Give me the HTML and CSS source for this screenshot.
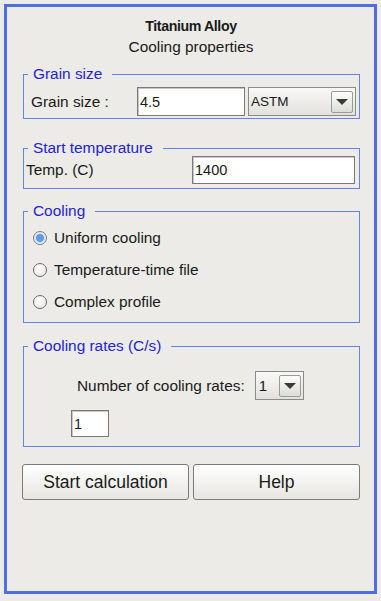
FILE: index.html
```html
<!DOCTYPE html>
<html>
<head>
  <meta charset="UTF-8">
  <title>Cooling properties</title>
  <link rel="stylesheet" href="styles.css">
</head>
<body>
  <div class="frame">
    <div class="title">Titanium Alloy</div>
    <div class="subtitle">Cooling properties</div>

    <fieldset class="group grain">
      <legend>Grain size</legend>
      <div class="row">
        <label class="lbl-grain">Grain size :</label>
        <div class="field w-grain">4.5</div>
        <div class="combo w-astm"><span class="combo-text">ASTM</span><span class="arrow"><i></i></span></div>
      </div>
    </fieldset>

    <fieldset class="group temp">
      <legend>Start temperature</legend>
      <div class="row">
        <label class="lbl-temp">Temp. (C)</label>
        <div class="field w-temp">1400</div>
      </div>
    </fieldset>

    <fieldset class="group cooling">
      <legend>Cooling</legend>
      <div class="radio"><span class="dot on"></span>Uniform cooling</div>
      <div class="radio"><span class="dot"></span>Temperature-time file</div>
      <div class="radio"><span class="dot"></span>Complex profile</div>
    </fieldset>

    <fieldset class="group rates">
      <legend>Cooling rates (C/s)</legend>
      <div class="row rates-row">
        <label>Number of cooling rates:</label>
        <div class="combo w-num"><span class="combo-text">1</span><span class="arrow"><i></i></span></div>
      </div>
      <div class="field w-rate">1</div>
    </fieldset>

    <div class="buttons">
      <button>Start calculation</button>
      <button>Help</button>
    </div>
  </div>
</body>
</html>
```

FILE: styles.css
```css
body { margin: 0; background: #ecebe8; font-family: "Liberation Sans", Arial, sans-serif; font-size: 15.4px; color: #1a1a1a; }
.frame { margin: 4px; height: 584px; border: 3px solid #4f6fe0; background: #ecebe8; padding: 0 14px 0 15px; display: flex; flex-direction: column; }
.title { text-align: center; font-weight: bold; font-size: 14.2px; margin-top: 10px; height: 18px; line-height: 18px; letter-spacing: -0.4px; }
.subtitle { text-align: center; margin-top: 3px; height: 18px; line-height: 18px; }

/* group boxes */
.group { margin: 10px 0 0 1px; padding: 0 3px 2px 0; border: 1px solid #6283ea; min-width: 0; }
.group legend { color: #2424d0; padding: 0 10px 0 5px; margin-left: 4px; line-height: 16px; }
.row { display: flex; align-items: center; }

.field { background: #fff; border: 1px solid #7a7a7a; box-shadow: inset 1px 1px 0 #c8c8c8; box-sizing: border-box; padding-left: 2px; display: flex; align-items: center; font-size: 14.5px; }
.combo { border: 1px solid #8a8a8a; background: linear-gradient(#f8f8f6, #e2e1dd); box-sizing: border-box; display: flex; align-items: center; justify-content: space-between; padding: 0 2px; }
.combo-text { font-size: 13.5px; }
.arrow { width: 22px; height: 22px; border: 1px solid #9a9a9a; border-radius: 2px; box-sizing: border-box; background: linear-gradient(#fdfdfd, #dcdcd8); display: flex; align-items: center; justify-content: center; }
.arrow i { width: 0; height: 0; border-left: 6px solid transparent; border-right: 6px solid transparent; border-top: 6px solid #3a3a3a; margin-top: 1px; }

.grain .row { padding: 5px 0 0 7px; }
.lbl-grain { width: 106px; }
.w-grain { width: 108px; height: 29px; }
.w-astm { width: 108px; height: 29px; margin-left: 3px; }

.temp.group { margin-top: 21px; padding-bottom: 4px; padding-right: 4px; }
.temp .row { padding-left: 2px; }
.lbl-temp { flex: 1; }
.w-temp { width: 163px; height: 28px; }

.cooling.group { margin-top: 14px; padding: 3px 0 4px 9px; }
.cooling legend { margin-left: -5px; }
.radio { display: flex; align-items: center; height: 32px; }
.dot { width: 12px; height: 12px; border-radius: 50%; border: 1px solid #6a6a6a; background: radial-gradient(circle at 40% 35%, #ffffff, #e4e4e4); margin-right: 7px; }
.dot.on { background: radial-gradient(circle, #5a9ee8 0 3.5px, #cfe2f6 4.5px, #f0f0f0 6px); border-color: #7d7d7d; }

.rates.group { margin-top: 15px; padding: 17px 0 9px 47px; }
.rates legend { margin-left: -43px; }
.rates-row { padding-left: 6px; }
.rates-row label { margin-right: 10px; }
.w-num { width: 49px; height: 29px; padding-left: 3px; }
.w-num .combo-text { font-size: 15px; }
.w-rate { width: 38px; height: 27px; margin-top: 10px; }

.buttons { display: flex; gap: 4px; margin-top: 17px; }
.buttons button { flex: 1; height: 36px; font-family: "Liberation Sans", Arial, sans-serif; font-size: 17.5px; color: #1a1a1a; border: 1px solid #7b7b7b; border-radius: 3px; background: linear-gradient(#ffffff, #e6e5e1); }
```
